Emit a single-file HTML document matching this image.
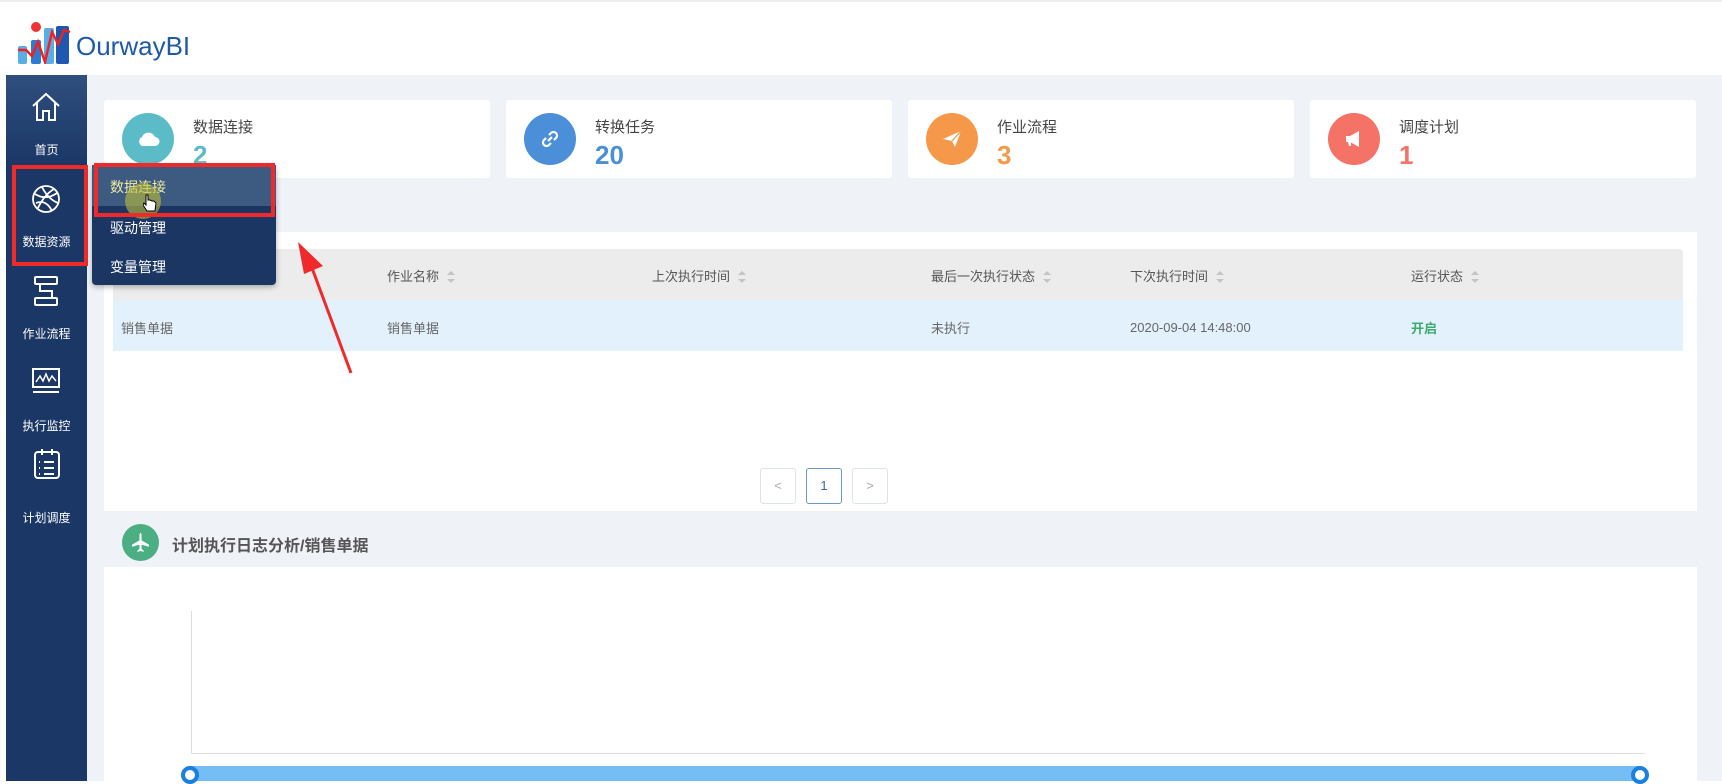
<!DOCTYPE html>
<html><head><meta charset="utf-8"><style>
*{margin:0;padding:0;box-sizing:border-box}
body{width:1722px;height:781px;overflow:hidden;background:#fff;font-family:"Liberation Sans","Noto Sans CJK SC",sans-serif;position:relative}
.abs{position:absolute}
#main{left:87px;top:75px;width:1635px;height:706px;background:#eff3f8}
#side{left:6px;top:75px;width:81px;height:706px;background:#1b3765}
.si{position:absolute;left:0;width:81px;text-align:center;color:#fff;font-size:12px}
.card{position:absolute;top:100px;height:78px;width:386px;background:#fff;border-radius:3px}
.card .c{position:absolute;left:18px;top:13px;width:52px;height:52px;border-radius:50%}
.card .t{position:absolute;left:89px;top:16px;font-size:15px;color:#444}
.card .n{position:absolute;left:89px;top:40px;font-size:26px;font-weight:bold}
.th{position:absolute;top:266px;font-size:13px;color:#555}
.td{position:absolute;top:318px;font-size:13px;color:#666}
.sort{display:inline-block;margin-left:8px;vertical-align:middle;width:8px;height:12px;position:relative;top:-1px}
.pg{position:absolute;top:468px;width:36px;height:36px;border:1px solid #dde3ea;border-radius:3px;background:#fff;text-align:center;line-height:34px;font-size:13px;color:#aaa}
.mi{position:absolute;left:18px;font-size:14px;color:#fff}
</style></head><body>
<div class="abs" style="left:0;top:0;width:1722px;height:75px;background:#fff;border-top:2px solid #eee"></div>
<svg class="abs" style="left:18px;top:18px" width="54" height="46" viewBox="0 0 54 46">
<rect x="0" y="28" width="9" height="18" rx="2" fill="#5aaee6"/>
<rect x="13" y="22" width="10" height="24" rx="2" fill="#2e7bd2"/>
<circle cx="18" cy="9" r="5" fill="#e33"/>
<rect x="26" y="10" width="10" height="36" rx="2" fill="#5aaee6"/>
<rect x="38" y="8" width="13" height="38" rx="2" fill="#1e58b0"/>
<polyline points="0,32 8,32 14,38 20,24 27,44 34,14 40,26 46,12 52,14" fill="none" stroke="#e22" stroke-width="2.5"/>
</svg>
<div class="abs" style="left:76px;top:31px;font-size:26px;color:#1e5aa8">OurwayBI</div>

<div id="main" class="abs"></div>
<div id="side" class="abs">
 <div class="abs" style="left:0;top:0;width:81px;height:90px;background:linear-gradient(#2f4f7e,#1b3765)"></div>
 <svg class="abs" style="left:24px;top:16px" width="32" height="32" viewBox="0 0 32 32" fill="none" stroke="#fff" stroke-width="2"><path d="M3 15 L16 3 L29 15 M7 12 V29 H13 V20 H19 V29 H25 V12"/></svg>
 <div class="si" style="top:66px">首页</div>
 <svg class="abs" style="left:24px;top:108px" width="32" height="32" viewBox="0 0 32 32" fill="none" stroke="#fff" stroke-width="1.8"><circle cx="16" cy="16" r="13"/><path d="M5 11 Q16 18 27 10 M8 25 Q14 12 24 6 M6 20 Q16 16 22 28 M12 4 Q18 16 28 20"/></svg>
 <div class="si" style="top:158px">数据资源</div>
 <svg class="abs" style="left:26px;top:200px" width="28" height="32" viewBox="0 0 28 32" fill="none" stroke="#fff" stroke-width="2"><rect x="3" y="2" width="22" height="7" rx="1"/><rect x="3" y="23" width="22" height="7" rx="1"/><path d="M8 9 V16 H20 V23"/></svg>
 <div class="si" style="top:250px">作业流程</div>
 <svg class="abs" style="left:24px;top:292px" width="32" height="28" viewBox="0 0 32 28" fill="none" stroke="#fff" stroke-width="2"><rect x="3" y="2" width="26" height="18"/><path d="M3 25 H29"/><polyline points="6,15 10,9 13,14 16,7 19,14 22,9 26,14" stroke-width="1.5"/></svg>
 <div class="si" style="top:342px">执行监控</div>
 <svg class="abs" style="left:26px;top:372px" width="30" height="34" viewBox="0 0 30 34" fill="none" stroke="#fff" stroke-width="2"><rect x="3" y="5" width="24" height="26" rx="3"/><path d="M10 2 V8 M20 2 V8 M12 15 H22 M12 21 H22 M12 27 H22 M7 15 H8 M7 21 H8 M7 27 H8"/></svg>
 <div class="si" style="top:434px">计划调度</div>
</div>
<div class="abs" style="left:12px;top:165px;width:76px;height:101px;border:4px solid #f02a2a"></div>

<div class="card" style="left:104px"><div class="c" style="background:#5bbcc8"></div>
<svg class="abs" style="left:32px;top:30px" width="24" height="18" viewBox="0 0 24 18"><path d="M6 16 A5 5 0 0 1 6 7 A7 7 0 0 1 19 7 A4.5 4.5 0 0 1 19 16 Z" fill="#fff"/></svg>
<div class="t">数据连接</div><div class="n" style="color:#5bbcc8">2</div></div>
<div class="card" style="left:506px"><div class="c" style="background:#4a8fd8"></div>
<svg class="abs" style="left:34px;top:29px" width="20" height="20" viewBox="0 0 20 20" fill="none" stroke="#fff" stroke-width="2.2"><path d="M8 12 L12 8 M9 6 L11 4 A3 3 0 0 1 16 9 L14 11 M11 14 L9 16 A3 3 0 0 1 4 11 L6 9"/></svg>
<div class="t">转换任务</div><div class="n" style="color:#4a8fd8">20</div></div>
<div class="card" style="left:908px"><div class="c" style="background:#f5984a"></div>
<svg class="abs" style="left:34px;top:30px" width="20" height="18" viewBox="0 0 20 18"><path d="M1 9 L19 1 L13 17 L10 11 Z" fill="#fff"/><path d="M10 11 L19 1" stroke="#f5984a" stroke-width="1.2"/></svg>
<div class="t">作业流程</div><div class="n" style="color:#f5984a">3</div></div>
<div class="card" style="left:1310px"><div class="c" style="background:#f47266"></div>
<svg class="abs" style="left:34px;top:30px" width="20" height="18" viewBox="0 0 20 18"><path d="M2 6 H6 L15 1 V17 L6 12 H2 Z M4 12 L5 16 H7 L7 12" fill="#fff"/></svg>
<div class="t">调度计划</div><div class="n" style="color:#f47266">1</div></div>

<div class="abs" style="left:104px;top:232px;width:1593px;height:279px;background:#fff"></div>
<div class="abs" style="left:113px;top:249px;width:1570px;height:51px;background:#ececec;border-radius:3px 3px 0 0"></div>
<div class="abs" style="left:113px;top:300px;width:1570px;height:51px;background:#e3f1fc"></div>
<svg width="0" height="0" style="position:absolute"><defs><g id="s"><path d="M4 0 L8 4 H0 Z M4 12 L8 8 H0 Z" fill="#c4c4c4"/></g></defs></svg>
<div class="th" style="left:387px">作业名称<svg class="sort" viewBox="0 0 8 12"><use href="#s"/></svg></div>
<div class="th" style="left:652px">上次执行时间<svg class="sort" viewBox="0 0 8 12"><use href="#s"/></svg></div>
<div class="th" style="left:931px">最后一次执行状态<svg class="sort" viewBox="0 0 8 12"><use href="#s"/></svg></div>
<div class="th" style="left:1130px">下次执行时间<svg class="sort" viewBox="0 0 8 12"><use href="#s"/></svg></div>
<div class="th" style="left:1411px">运行状态<svg class="sort" viewBox="0 0 8 12"><use href="#s"/></svg></div>
<div class="td" style="left:121px">销售单据</div>
<div class="td" style="left:387px">销售单据</div>
<div class="td" style="left:931px">未执行</div>
<div class="td" style="left:1130px;top:320px">2020-09-04 14:48:00</div>
<div class="td" style="left:1411px;color:#3daa6e;font-weight:bold">开启</div>
<div class="pg" style="left:760px">&lt;</div>
<div class="pg" style="left:806px;border-color:#6b9cc0;color:#3a6a92">1</div>
<div class="pg" style="left:852px">&gt;</div>

<div class="abs" style="left:122px;top:524px;width:37px;height:37px;border-radius:50%;background:#4caf84"></div>
<svg class="abs" style="left:130px;top:532px" width="21" height="21" viewBox="0 0 20 20"><path d="M10 1 C11 1 11 3 11 4 V8 L18 12 V14 L11 12 V16 L13 18 V19 L10 18 L7 19 V18 L9 16 V12 L2 14 V12 L9 8 V4 C9 3 9 1 10 1 Z" fill="#fff"/></svg>
<div class="abs" style="left:172px;top:532px;font-size:16px;font-weight:bold;color:#555">计划执行日志分析/销售单据</div>

<div class="abs" style="left:104px;top:567px;width:1593px;height:214px;background:#fff"></div>
<div class="abs" style="left:191px;top:611px;width:1px;height:142px;background:#ddd"></div>
<div class="abs" style="left:191px;top:753px;width:1454px;height:1px;background:#e0e0e0"></div>
<div class="abs" style="left:191px;top:766px;width:1449px;height:15px;background:#74bdf5"></div>
<div class="abs" style="left:181px;top:766px;width:18px;height:18px;border-radius:50%;border:4px solid #1a7fe0;background:#fff"></div>
<div class="abs" style="left:1631px;top:766px;width:18px;height:18px;border-radius:50%;border:4px solid #1a7fe0;background:#fff"></div>

<div class="abs" style="left:92px;top:165px;width:184px;height:120px;background:#1b3663;border-radius:0 0 4px 4px;box-shadow:0 2px 6px rgba(0,0,0,.3)">
 <div class="abs" style="left:0;top:0;width:184px;height:41px;background:#3d5a80"></div>
 <div class="mi" style="top:12px;color:#f0eca0">数据连接</div>
 <div class="mi" style="top:53px">驱动管理</div>
 <div class="mi" style="top:92px">变量管理</div>
</div>
<div class="abs" style="left:125px;top:183px;width:36px;height:36px;border-radius:50%;background:rgba(190,190,60,.6)"></div>
<svg class="abs" style="left:143px;top:194px" width="14" height="18" viewBox="0 0 14 18"><path d="M3 1 V11 L1 9 L0 11 L4 17 H12 L13 9 L11 7 L9 7 L7 6 L5 6 V1 Z" fill="#fff" stroke="#000" stroke-width="1"/></svg>
<div class="abs" style="left:94px;top:163px;width:181px;height:54px;border:4px solid #f02a2a"></div>

<svg class="abs" style="left:280px;top:230px" width="90" height="150" viewBox="0 0 90 150"><path d="M71 143 L32 38" stroke="#f02a2a" stroke-width="3"/><path d="M18 12 L43 36 L24 44 Z" fill="#f02a2a"/></svg>
</body></html>
